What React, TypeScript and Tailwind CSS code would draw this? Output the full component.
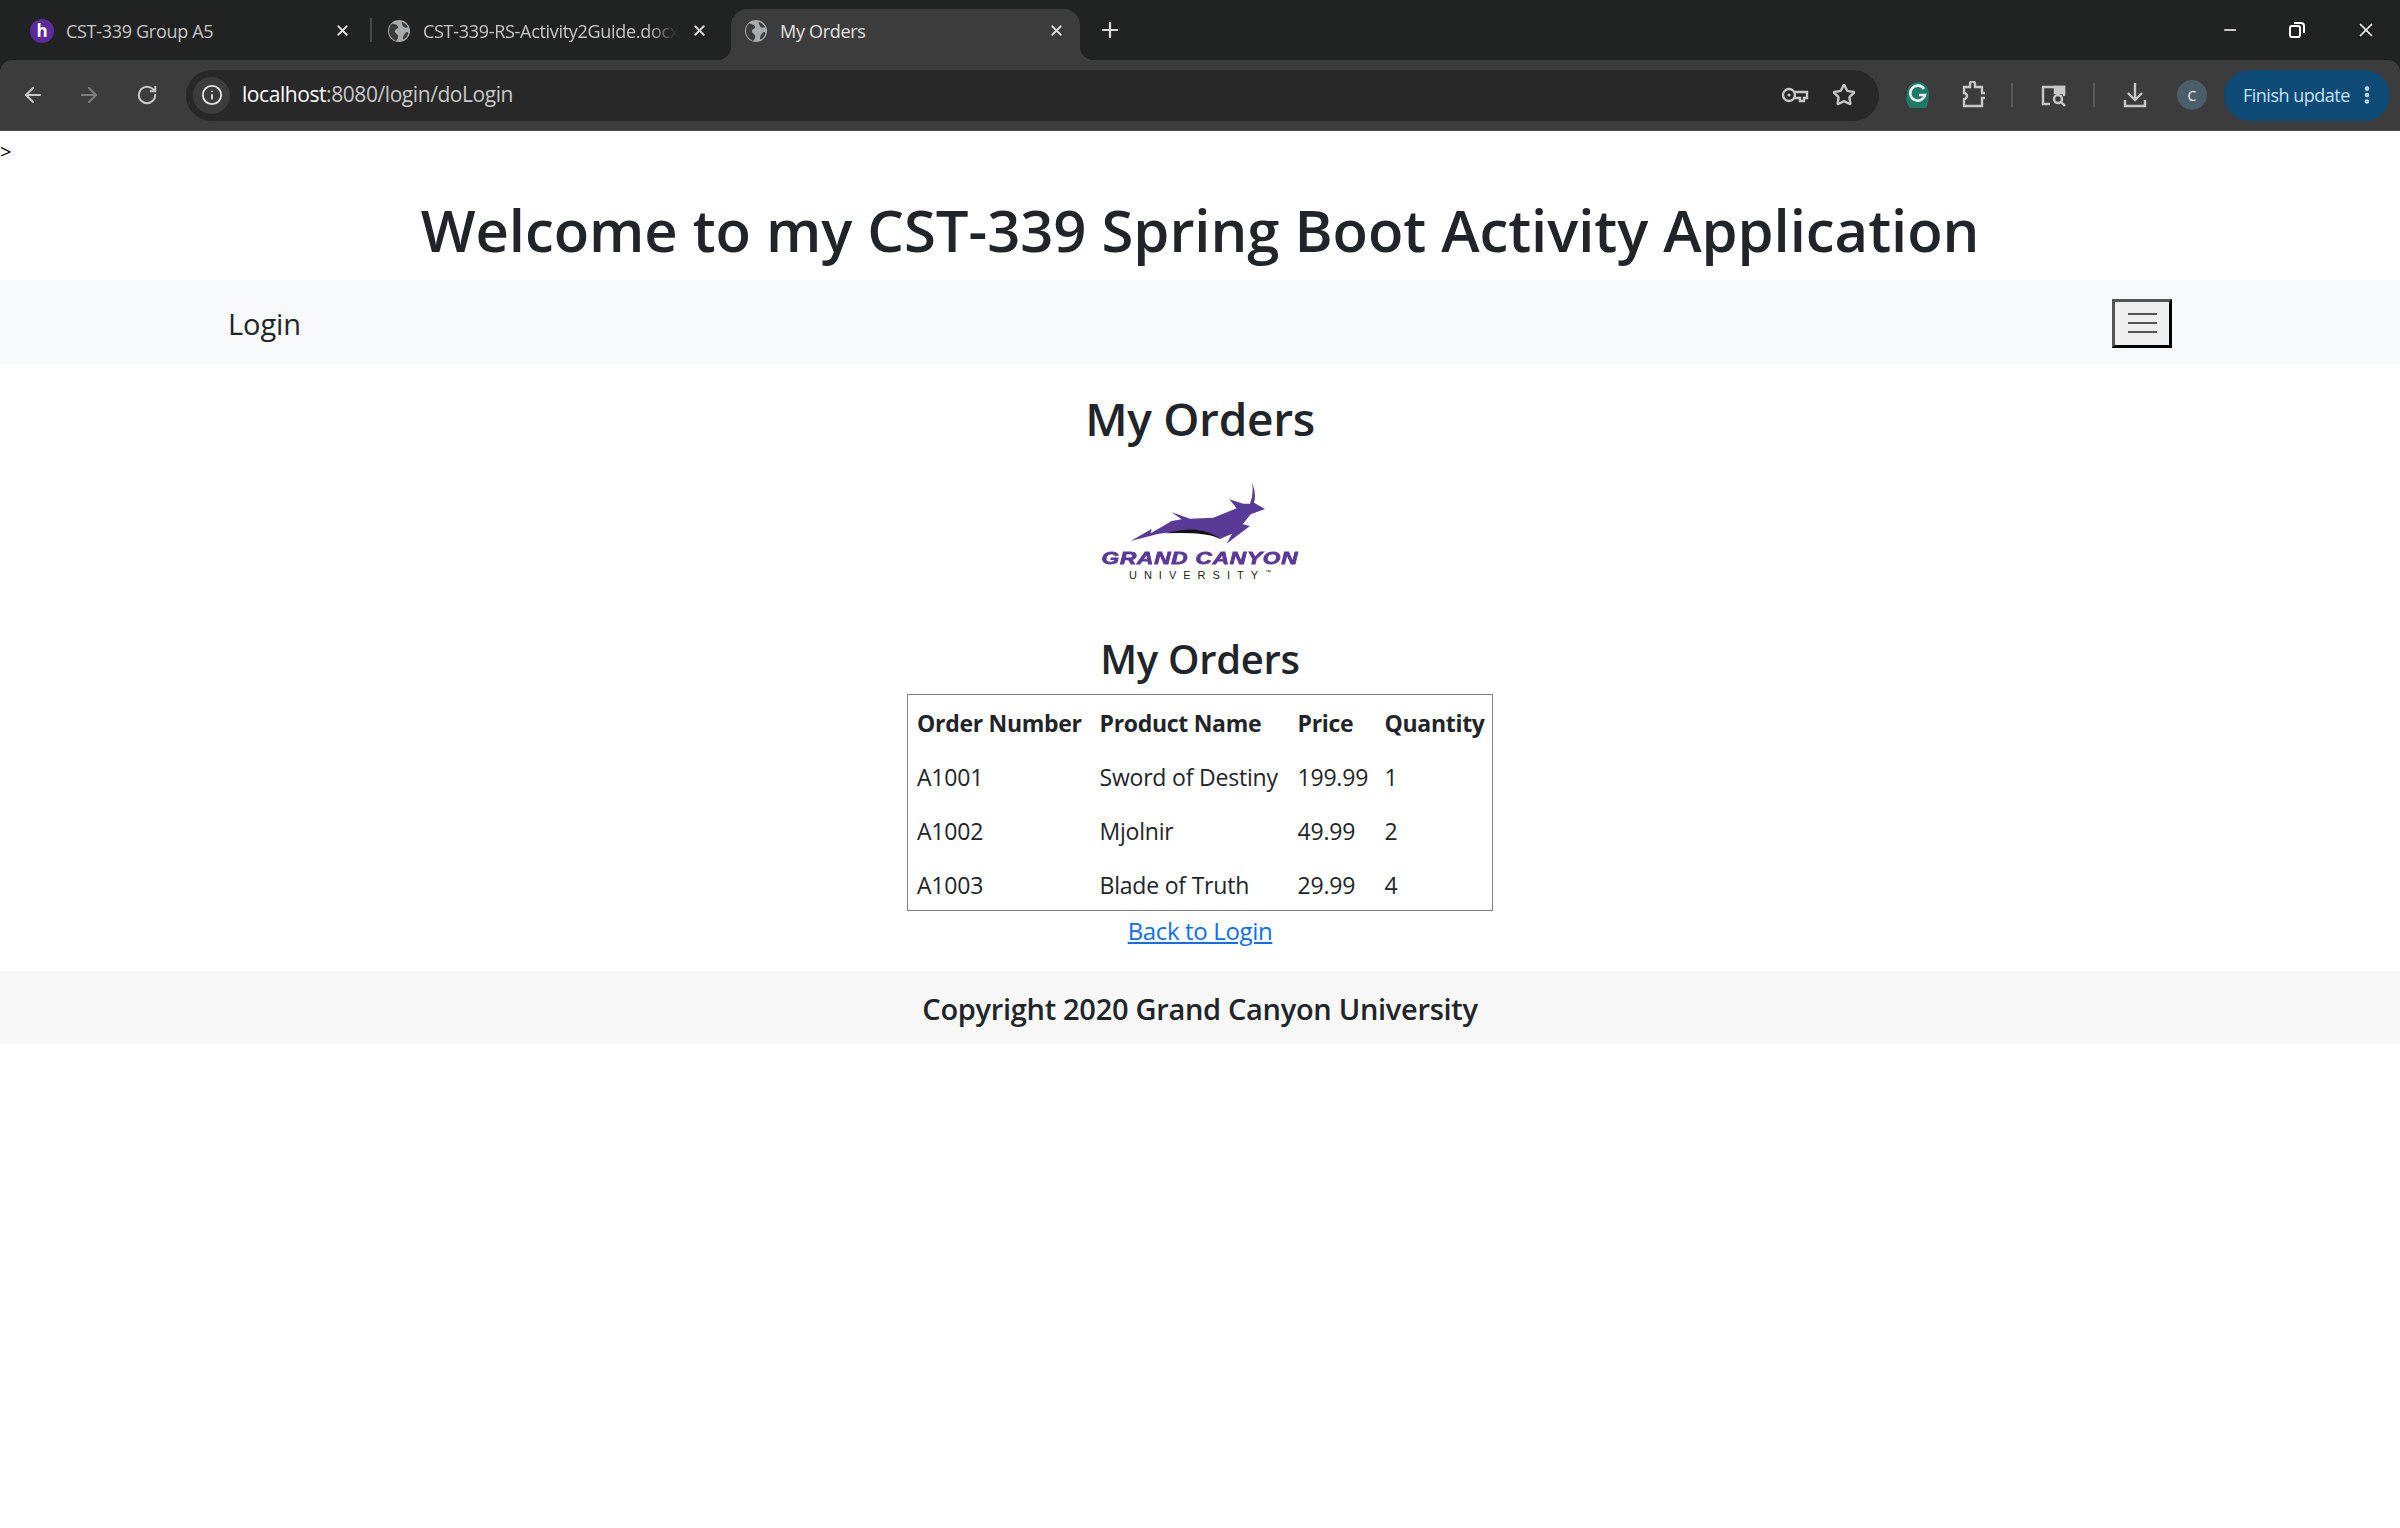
import React from "react";
import { ArrowLeft, ArrowRight, RotateCw, Info, Star, X, Plus, Minus, EllipsisVertical } from "lucide-react";

const uiFont = "font-['Open_Sans',sans-serif]";

function Globe() {
  return (
    <svg width="24" height="24" viewBox="0 0 24 24" className="shrink-0">
      <circle cx="12" cy="12" r="11" fill="#a8abad" />
      <path d="M5 4.5c3 .5 5 1 6 3s-2 2-3 4 2 3 3 5-1 4-2 5.5C5 20 2 16.500 2 12c0-3 1-5.500 3-7.500zM15 3c3 1 5 3 6 5-2 1-4 1-5-1s-2-3-1-4zM20 13c1 0 1.500 1 1 2.500-1 2-2.500 4-4.500 5-1-1-.5-3 .5-4.500s2-3 3-3z" fill="#3c3c3c" />
    </svg>
  );
}

function Tab({ icon, title, active, fade }: { icon: React.ReactNode; title: string; active?: boolean; fade?: boolean }) {
  return (
    <div
      className={
        active
          ? "relative flex items-center w-[349px] h-[51px] pb-[8px] pl-[13px] pr-[15px] rounded-t-[16px] bg-[#3c3c3c] before:absolute before:bottom-0 before:left-[-14px] before:w-[14px] before:h-[14px] before:bg-[radial-gradient(circle_at_0_0,#202322_14px,#3c3c3c_14.5px)] after:absolute after:bottom-0 after:right-[-14px] after:w-[14px] after:h-[14px] after:bg-[radial-gradient(circle_at_100%_0,#202322_14px,#3c3c3c_14.5px)]"
          : "flex items-center w-[349px] h-[51px] pb-[8px] pl-[13px] pr-[15px]"
      }
    >
      {icon}
      <span className={`ml-[12px] flex-1 overflow-hidden whitespace-nowrap text-[18px] leading-[28px] pt-[1px] tracking-[-0.3px] ${active ? "text-[#e3e3e3]" : "text-[#c7c7c7]"} ${fade ? "[mask-image:linear-gradient(to_right,black_86%,transparent_98%)]" : ""}`}>
        {title}
      </span>
      <X size={17} strokeWidth={2.5} className="ml-2 text-[#dcdcdc] shrink-0" />
    </div>
  );
}

function BrowserChrome() {
  return (
    <div className={`bg-[#202322] ${uiFont}`}>
      <div className="flex items-end h-[60px] pl-[17px]">
        <Tab
          title="CST-339 Group A5"
          icon={
            <span className="flex items-center justify-center w-[24px] h-[24px] rounded-full bg-[#5b2a9b] text-white text-[17px] font-bold shrink-0">h</span>
          }
        />
        <div className="w-[2px] h-[24px] mb-[18px] ml-[4px] bg-[#4a4a4a]" />
        <div className="ml-[2px] w-[353px]">
          <Tab title="CST-339-RS-Activity2Guide.docx" icon={<Globe />} fade />
        </div>
        <div className="ml-[4px]">
          <Tab title="My Orders" icon={<Globe />} active />
        </div>
        <Plus size={24} strokeWidth={2.2} className="ml-[18px] mb-[18px] text-[#dcdcdc]" />
        <div className="ml-auto flex items-center h-[60px] pr-[23px] gap-[49px] self-start text-white">
          <Minus size={18} strokeWidth={2.2} />
          <svg width="18" height="18" viewBox="0 0 18 18" fill="none" stroke="currentColor" strokeWidth="2">
            <rect x="2" y="5" width="10" height="11" rx="2" />
            <path d="M6 2h7a3 3 0 0 1 3 3v7" />
          </svg>
          <X size={22} strokeWidth={1.8} />
        </div>
      </div>
      <div className="flex items-center h-[71px] rounded-t-[12px] bg-[#3c3c3c] border-b border-b-[#4a4a4a] pl-[21px] pr-[10px] text-[#c7c7c7]">
        <ArrowLeft size={24} strokeWidth={2.2} />
        <ArrowRight size={24} strokeWidth={2.2} className="ml-[32px] text-[#7d7d7d]" />
        <RotateCw size={22} strokeWidth={2.2} className="ml-[35px]" />
        <div className="ml-[28px] flex items-center w-[1693px] h-[51px] rounded-full bg-[#282828] pl-[7px] pr-[23px]">
          <span className="flex items-center justify-center w-[37px] h-[37px] rounded-full bg-[#3c3c3c]">
            <Info size={22} strokeWidth={2} className="text-[#e3e3e3]" />
          </span>
          <span className="ml-[12px] text-[21px] tracking-[-0.43px] text-[#c7c7c7]">
            <span className="text-white">localhost</span>:8080/login/doLogin
          </span>
          {/* key icon */}
          <svg width="28" height="18" viewBox="0 0 28 18" fill="none" stroke="currentColor" strokeWidth="2.4" className="ml-auto">
            <circle cx="8" cy="9" r="6" />
            <circle cx="8" cy="9" r="1.6" fill="currentColor" stroke="none" />
            <path d="M14 6h12v6h-3v3h-4v-3h-5" />
          </svg>
          <Star size={24} strokeWidth={2.4} className="ml-[23px]" />
        </div>
        {/* grammarly badge */}
        <svg width="24" height="28" viewBox="0 0 24 28" className="ml-[27px]">
          <path d="M12 1a11 12 0 0 1 11 12c0 4-1 8-2 12l-1 2H4a11 13 0 0 1-3-14A11 12 0 0 1 12 1z" fill="#1f7a66" />
          <path d="M18 8a7.500 7.500 0 1 0 1 6h-6" fill="none" stroke="#e8f0ee" strokeWidth="2.6" />
        </svg>
        {/* extensions */}
        <svg width="24" height="28" viewBox="0 0 24 28" fill="none" stroke="currentColor" strokeWidth="2.4" className="ml-[31px]">
          <path d="M3 6h6V3a2.500 2.500 0 0 1 5 0v3h7v6h2a2.500 2.500 0 0 1 0 5h-2v8H3v-7a3 3 0 0 0 0-6z" />
        </svg>
        <div className="ml-[26px] w-[2px] h-[24px] bg-[#5a5a5a]" />
        <svg width="28" height="24" viewBox="0 0 28 24" fill="none" stroke="currentColor" strokeWidth="2.4" className="ml-[27px]">
          <path d="M10 21H3V4h21v9" />
          <path d="M15 4h9v6h-9z" fill="currentColor" />
          <circle cx="18" cy="16" r="4" />
          <path d="M21 19l4 4" />
        </svg>
        <div className="ml-[25px] w-[2px] h-[24px] bg-[#5a5a5a]" />
        {/* downloads */}
        <svg width="24" height="26" viewBox="0 0 24 26" fill="none" stroke="currentColor" strokeWidth="2.4" className="ml-[28px]">
          <path d="M12 1v17M5 11l7 7 7-7M2 18v6h20v-6" />
        </svg>
        <span className="ml-[30px] flex items-center justify-center w-[30px] h-[30px] rounded-full bg-[#4a5d6b] text-white text-[14px]">C</span>
        <div className="ml-[17px] flex items-center w-[166px] h-[51px] rounded-full bg-[#0d4a75] pl-[19px] text-[#c2e4ff]">
          <span className="text-[18px] tracking-[-0.5px] whitespace-nowrap">Finish update</span>
          <EllipsisVertical size={22} strokeWidth={3} className="ml-[6px]" />
        </div>
      </div>
    </div>
  );
}

function GcuLogo() {
  return (
    <div className="flex flex-col items-center w-[195px]">
      <svg width="140" height="62" viewBox="220 40 420 186">
        <path
          d="M222 220 L285 184 L282 197 L345 160 L375 155 L345 134 L400 153 L470 150 L540 122 L518 95 L560 108 L580 108 Q592 80 586 44 Q600 80 592 105 L625 124 L582 140 L558 170 L580 175 L540 205 L510 228 L526 198 L490 214 L425 186 L428 196 Q350 186 280 205 Z"
          fill="#5a3a97"
        />
        <path d="M322 197 Q400 180 430 188 Q465 195 492 214 Q450 192 322 197 Z" fill="#111" />
      </svg>
      <span className="mt-[9px] font-['Liberation_Sans',sans-serif] text-[17px] leading-[14px] font-bold italic text-[#5a3a97] tracking-[0.6px] whitespace-nowrap [-webkit-text-stroke:0.8px_#5a3a97] scale-x-[1.33]">
        GRAND CANYON
      </span>
      <span className="font-['Liberation_Sans',sans-serif] text-[11px] leading-[12px] text-[#222] tracking-[7px] whitespace-nowrap">
        UNIVERSITY<span className="text-[6px] tracking-normal align-super">™</span>
      </span>
    </div>
  );
}

const rows = [
  ["A1001", "Sword of Destiny", "199.99", "1"],
  ["A1002", "Mjolnir", "49.99", "2"],
  ["A1003", "Blade of Truth", "29.99", "4"],
];

export default function App() {
  return (
    <div className={`min-h-[1528px] bg-white text-[#212529] ${uiFont}`}>
      <BrowserChrome />
      <div className="h-[36px] pt-[7px] text-[20px] leading-[28px] text-black">&gt;</div>
      <h1 className="mt-[27px] mb-[14px] text-center text-[58px] leading-[72px] font-semibold tracking-[-0.05px]">
        Welcome to my CST-339 Spring Boot Activity Application
      </h1>
      <nav className="flex items-center justify-between h-[84px] pt-[2px] bg-[#f8f9fa] pl-[228px] pr-[228px]">
        <span className="pt-[2px] text-[29px] tracking-[-0.1px]">Login</span>
        <button className="flex flex-col items-center justify-center gap-[7px] w-[60px] h-[49px] bg-[#efefef] border-[3px] border-t-[#555] border-l-[#555] border-b-black border-r-black">
          <span className="w-[29px] h-[2px] bg-[#555]" />
          <span className="w-[29px] h-[2px] bg-[#555]" />
          <span className="w-[29px] h-[2px] bg-[#555]" />
        </button>
      </nav>
      <main className="flex flex-col items-center">
        <h2 className="mt-[25px] text-[46px] leading-[58px] font-semibold tracking-[-0.3px]">My Orders</h2>
        <div className="mt-[34px] h-[133px]">
          <GcuLogo />
        </div>
        <h3 className="mt-[20px] text-[40px] leading-[50px] font-semibold tracking-[-0.3px]">My Orders</h3>
        <table className="mt-[10px] w-[586px] border border-[#808080] border-collapse text-[23px] tracking-[-0.3px] table-fixed">
          <thead>
            <tr className="h-[54px]">
              <th className="w-[192px] pl-[9px] pt-[2px] text-left font-bold whitespace-nowrap">Order Number</th>
              <th className="w-[198px] pt-[2px] text-left font-bold whitespace-nowrap">Product Name</th>
              <th className="w-[87px] pt-[2px] text-left font-bold">Price</th>
              <th className="pt-[2px] text-left font-bold">Quantity</th>
            </tr>
          </thead>
          <tbody className="tracking-[-0.2px]">
            {rows.map((r) => (
              <tr key={r[0]} className="h-[54px]">
                <td className="pl-[9px] pt-[4px]">{r[0]}</td>
                <td className="pt-[4px] whitespace-nowrap">{r[1]}</td>
                <td className="pt-[4px]">{r[2]}</td>
                <td className="pt-[4px]">{r[3]}</td>
              </tr>
            ))}
          </tbody>
        </table>
        <a href="#" className="pt-[2px] text-[24px] leading-[36px] tracking-[-0.35px] text-[#0d6efd] underline">
          Back to Login
        </a>
      </main>
      <footer className="mt-[22px] flex items-center justify-center h-[73px] pt-[2px] bg-[#f8f8f8] text-[29px] font-semibold tracking-[-0.3px]">
        Copyright 2020 Grand Canyon University
      </footer>
    </div>
  );
}
